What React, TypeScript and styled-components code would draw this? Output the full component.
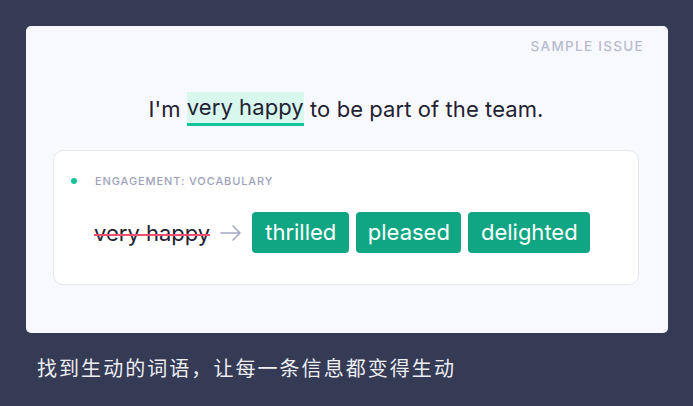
import React from "react";
import styled, { createGlobalStyle } from "styled-components";

const Global = createGlobalStyle`
  html, body { margin: 0; padding: 0; background: #353a55; }
  body { font-family: Inter, "Noto Sans", sans-serif; }
  * { box-sizing: border-box; }
`;

const Page = styled.div`
  width: 693px;
  height: 406px;
  background: #353a55;
  padding: 26px 25px 0 26px;
  display: flex;
  flex-direction: column;
`;

const Card = styled.div`
  width: 642px;
  height: 307px;
  background: #f8f9fe;
  border-radius: 5px;
  padding: 12px 29px 0 27px;
  display: flex;
  flex-direction: column;
`;

const Label = styled.div`
  align-self: flex-end;
  margin-right: -5px;
  font-size: 13.5px;
  letter-spacing: 1.3px;
  color: #b7bbd0;
  font-weight: 500;
  line-height: 16px;
`;

const Sentence = styled.p`
  margin: 38px 0 0 0;
  text-align: center;
  font-size: 22px;
  line-height: 34px;
  height: 34px;
  color: #1f2133;
  letter-spacing: 0.08px;
`;

const Highlight = styled.span`
  display: inline-block;
  background: #d8f7ed;
  border-bottom: 3px solid #15c39a;
  line-height: 31px;
  vertical-align: top;
`;

const Issue = styled.div`
  margin-top: 24px;
  height: 135px;
  background: #ffffff;
  border: 1px solid #e6e8f1;
  border-radius: 10px;
  padding: 24px 20px 0 17px;
  display: flex;
  flex-direction: column;
`;

const Category = styled.div`
  display: flex;
  align-items: center;
  gap: 18px;
  font-size: 11px;
  font-weight: 500;
  letter-spacing: 0.9px;
  color: #9ea2b9;
  line-height: 12px;
`;

const Dot = styled.span`
  width: 6px;
  height: 6px;
  border-radius: 50%;
  background: #15c39a;
`;

const Row = styled.div`
  margin-top: 25px;
  padding-left: 23px;
  display: flex;
  align-items: center;
  gap: 7px;
`;

const Strike = styled.span`
  font-size: 22px;
  color: #1f2133;
  position: relative;
  margin-right: 3px;
  &::after {
    content: "";
    position: absolute;
    left: 0;
    right: 0;
    top: 14px;
    height: 2px;
    background: #f0506e;
  }
`;

const Arrow = styled.svg`
  width: 22px;
  height: 16px;
  margin-right: 3px;
`;

const Chip = styled.span<{ $pad: number }>`
  background: #11a683;
  color: #ffffff;
  font-size: 22px;
  line-height: 41px;
  height: 41px;
  padding: 0 ${(p) => p.$pad}px;
  border-radius: 4px;
`;

const Caption = styled.div`
  margin-top: 20px;
  padding-left: 11px;
  font-family: "Noto Sans CJK SC", sans-serif;
  font-size: 20px;
  letter-spacing: 2.05px;
  color: #eceef4;
  line-height: 30px;
`;

export default function App() {
  return (
    <>
      <Global />
      <Page>
        <Card>
          <Label>SAMPLE ISSUE</Label>
          <Sentence>
            I'm <Highlight>very happy</Highlight> to be part of the team.
          </Sentence>
          <Issue>
            <Category>
              <Dot />
              ENGAGEMENT: VOCABULARY
            </Category>
            <Row>
              <Strike>very happy</Strike>
              <Arrow viewBox="0 0 22 16" fill="none" stroke="#a4a8c2" strokeWidth="1.6" strokeLinecap="round" strokeLinejoin="round">
                <path d="M1 8 H20 M13 1 L20 8 L13 15" />
              </Arrow>
              <Chip $pad={13}>thrilled</Chip>
              <Chip $pad={11.5}>pleased</Chip>
              <Chip $pad={12.5}>delighted</Chip>
            </Row>
          </Issue>
        </Card>
        <Caption>找到生动的词语，让每一条信息都变得生动</Caption>
      </Page>
    </>
  );
}
